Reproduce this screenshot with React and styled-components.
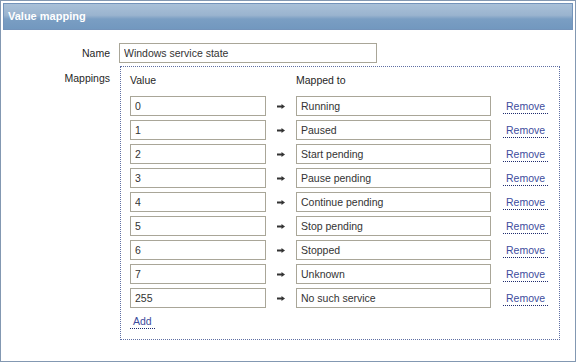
import React from 'react';
import styled, { createGlobalStyle } from 'styled-components';

const GlobalStyle = createGlobalStyle`
  body {
    margin: 0;
    font-family: "Liberation Sans", Arial, sans-serif;
    font-size: 10.5px;
    color: #1f1f1f;
    background: #fff;
  }
`;

const Page = styled.div`
  box-sizing: border-box;
  width: 576px;
  height: 362px;
  border: 1px solid #8398b2;
  padding: 2px;
  background: #fff;
`;

const Header = styled.div`
  box-sizing: border-box;
  height: 27px;
  border: 1px solid #7393ba;
  background: linear-gradient(#a9c0d8, #9ab4cf 45%, #7a9ec3 60%, #7298bf);
  color: #fff;
  font-size: 11px;
  font-weight: bold;
  line-height: 25px;
  padding-left: 4px;
`;

const Form = styled.div`
  display: grid;
  grid-template-columns: 107px 440px;
  column-gap: 9px;
  row-gap: 3px;
  padding-top: 13px;
`;

const Label = styled.div`
  text-align: right;
  line-height: 14px;
  align-self: ${(p) => (p.$top ? 'start' : 'center')};
  padding-top: ${(p) => (p.$top ? '5px' : '0')};
`;

const TextInput = styled.input`
  box-sizing: border-box;
  width: ${(p) => p.$width}px;
  height: 20px;
  border: 1px solid #a9a698;
  padding: 0 4px;
  font-family: "Liberation Sans", Arial, sans-serif;
  font-size: 10.5px;
  color: #333;
  background: #fff;
  outline: none;
  margin: 0;
`;

const MappingBox = styled.div`
  box-sizing: border-box;
  width: 440px;
  margin-left: 1px;
  border: 1px dotted #5f6fa3;
  padding: 6px 0 10px 9px;
  display: flex;
  flex-direction: column;
  gap: 4px;
`;

const Row = styled.div`
  display: grid;
  grid-template-columns: 136px 30px 195px auto;
  align-items: center;
  justify-items: start;
`;

const HeadRow = styled(Row)`
  line-height: 14px;
  margin-bottom: 5px;
`;

const Arrow = styled.svg`
  justify-self: center;
  display: block;
`;

const Link = styled.a`
  display: inline-block;
  line-height: 14px;
  padding: 0 3px;
  color: #3d4c9d;
  text-decoration: none;
  border-bottom: 1px dotted #1e2b6e;
  cursor: pointer;
`;

const RemoveLink = styled(Link)`
  margin-left: 12px;
`;

const AddRow = styled.div`
  margin-top: 2px;
`;

const mappings = [
  ['0', 'Running'],
  ['1', 'Paused'],
  ['2', 'Start pending'],
  ['3', 'Pause pending'],
  ['4', 'Continue pending'],
  ['5', 'Stop pending'],
  ['6', 'Stopped'],
  ['7', 'Unknown'],
  ['255', 'No such service'],
];

const ArrowIcon = () => (
  <Arrow width="8" height="5" viewBox="0 0 8 5">
    <rect x="0" y="1.5" width="5" height="2" fill="#333" />
    <path d="M4.5 0 L8 2.5 L4.5 5 Z" fill="#333" />
  </Arrow>
);

export default function App() {
  return (
    <Page>
      <GlobalStyle />
      <Header>Value mapping</Header>
      <Form>
        <Label>Name</Label>
        <TextInput $width={258} defaultValue="Windows service state" />
        <Label $top>Mappings</Label>
        <MappingBox>
          <HeadRow>
            <span>Value</span>
            <span />
            <span>Mapped to</span>
          </HeadRow>
          {mappings.map(([value, mapped]) => (
            <Row key={value}>
              <TextInput $width={136} defaultValue={value} />
              <ArrowIcon />
              <TextInput $width={195} defaultValue={mapped} />
              <RemoveLink>Remove</RemoveLink>
            </Row>
          ))}
          <AddRow>
            <Link>Add</Link>
          </AddRow>
        </MappingBox>
      </Form>
    </Page>
  );
}
